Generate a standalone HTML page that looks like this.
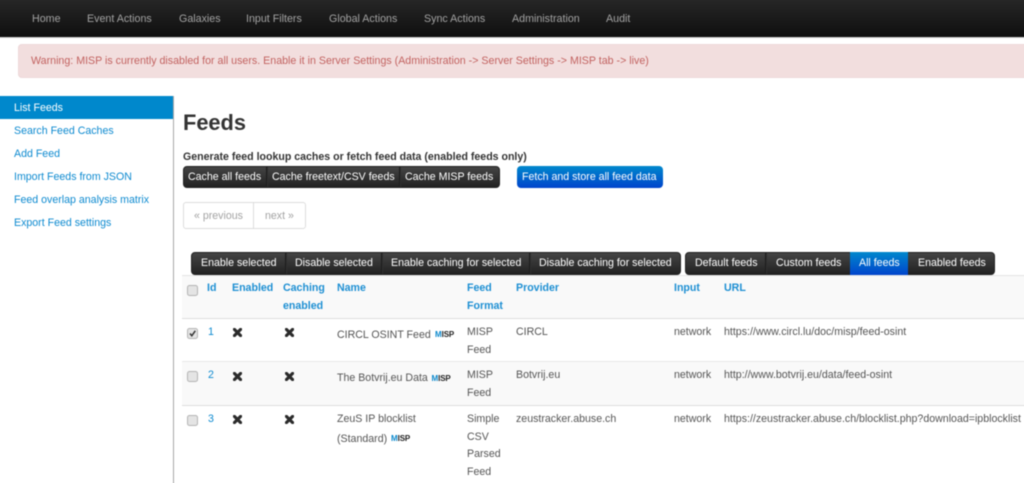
<!DOCTYPE html>
<html><head><meta charset="utf-8"><style>
html,body{margin:0;padding:0;background:#fff;overflow:hidden}
#o{position:relative;width:1024px;height:483px;overflow:hidden}
#r{position:absolute;left:0;top:0;width:1024px;height:483px;font-family:"Liberation Sans",sans-serif;font-size:10.62px;color:#555;filter:blur(.4px)}
#r div,#r span,#r svg{position:absolute}
.t{white-space:nowrap;line-height:14px;height:14px}
.n{color:#a2a2a2;font-size:10.7px}
.s{color:#0d8ad0;font-size:10.62px}
.b{color:#fff;font-size:10.62px}
.h{color:#1d8fd3;font-weight:bold;font-size:10.62px}
.sep{width:1px;background:#1c1c1c;border-right:1px solid #303030}
.grp{background:linear-gradient(#444,#222);border-radius:4px;border:1px solid #222;box-sizing:border-box}
.m{font-size:8px;font-weight:bold;color:#222;line-height:10px;height:10px;white-space:nowrap;letter-spacing:-.1px}
.m b{color:#0a88cc}
.c{width:11px;height:11px;box-sizing:border-box;background:#e4e4e4;border:1px solid #b4b4b4;border-radius:2.5px}
</style></head><body><div id="o"><div id="r">
<div style="left:-6px;top:-6px;width:1036px;height:43px;background:linear-gradient(#262626 6px,#0f0f0f)"></div>
<div style="left:-6px;top:37px;width:1036px;height:1px;background:#ccc"></div>
<div class="t n" style="left:32px;top:12px">Home</div>
<div class="t n" style="left:87px;top:12px">Event Actions</div>
<div class="t n" style="left:179px;top:12px">Galaxies</div>
<div class="t n" style="left:246px;top:12px">Input Filters</div>
<div class="t n" style="left:329px;top:12px">Global Actions</div>
<div class="t n" style="left:424px;top:12px">Sync Actions</div>
<div class="t n" style="left:512px;top:12px">Administration</div>
<div class="t n" style="left:606px;top:12px">Audit</div>

<div style="left:18px;top:44px;width:1012px;height:34px;background:#f2dede;border-radius:4px;box-shadow:inset 0 0 0 1px #eed9da"></div>
<div class="t" style="left:31px;top:54px;color:#c26260;font-size:10.66px">Warning: MISP is currently disabled for all users. Enable it in Server Settings (Administration -&gt; Server Settings -&gt; MISP tab -&gt; live)</div>

<div style="left:173px;top:96px;width:1px;height:393px;background:#a8a8a8"></div>
<div style="left:-6px;top:96px;width:179px;height:23px;background:#0088cc"></div>
<div class="t" style="left:14px;top:101px;color:#fff">List Feeds</div>
<div class="t s" style="left:14px;top:124px">Search Feed Caches</div>
<div class="t s" style="left:14px;top:147px">Add Feed</div>
<div class="t s" style="left:14px;top:170px">Import Feeds from JSON</div>
<div class="t s" style="left:14px;top:193px">Feed overlap analysis matrix</div>
<div class="t s" style="left:14px;top:216px">Export Feed settings</div>

<div class="t" style="left:183px;top:116px;font-size:21.8px;font-weight:bold;color:#333">Feeds</div>
<div class="t" style="left:183px;top:150px;font-weight:bold;color:#333;font-size:10.6px">Generate feed lookup caches or fetch feed data (enabled feeds only)</div>

<div class="grp" style="left:183px;top:166px;width:317px;height:22px"></div>
<div class="sep" style="left:266px;top:167px;height:20px"></div>
<div class="sep" style="left:399px;top:167px;height:20px"></div>
<div class="t b" style="left:188px;top:170px">Cache all feeds</div>
<div class="t b" style="left:272px;top:170px">Cache freetext/CSV feeds</div>
<div class="t b" style="left:405px;top:170px">Cache MISP feeds</div>
<div style="left:517px;top:166px;width:146px;height:22px;border-radius:4px;background:linear-gradient(#0088cc,#0044cc)"></div>
<div class="t b" style="left:522px;top:170px">Fetch and store all feed data</div>

<div style="left:183px;top:202px;width:123px;height:27px;box-sizing:border-box;border:1px solid #ddd;border-radius:3px;background:#fff"></div>
<div style="left:253px;top:203px;width:1px;height:25px;background:#ddd"></div>
<div class="t" style="left:194px;top:209px;color:#a3a3a3">« previous</div>
<div class="t" style="left:265px;top:209px;color:#a3a3a3">next »</div>

<div class="grp" style="left:191px;top:252px;width:490px;height:23px"></div>
<div class="sep" style="left:285px;top:253px;height:21px"></div>
<div class="sep" style="left:381px;top:253px;height:21px"></div>
<div class="sep" style="left:529px;top:253px;height:21px"></div>
<div class="t b" style="left:201px;top:256px">Enable selected</div>
<div class="t b" style="left:295px;top:256px">Disable selected</div>
<div class="t b" style="left:391px;top:256px">Enable caching for selected</div>
<div class="t b" style="left:539px;top:256px">Disable caching for selected</div>

<div class="grp" style="left:685px;top:252px;width:310px;height:23px"></div>
<div class="sep" style="left:765px;top:253px;height:21px"></div>
<div style="left:850px;top:252px;width:58px;height:23px;background:linear-gradient(#0088cc,#0044cc)"></div>
<div class="t b" style="left:695px;top:256px">Default feeds</div>
<div class="t b" style="left:776px;top:256px">Custom feeds</div>
<div class="t b" style="left:859px;top:256px">All feeds</div>
<div class="t b" style="left:918px;top:256px">Enabled feeds</div>

<div style="left:182px;top:275px;width:848px;height:44px;background:#f9f9f9;border-top:1px solid #e4e4e4;box-sizing:border-box"></div>
<div style="left:182px;top:318px;width:848px;height:1px;background:#ddd"></div>
<div style="left:182px;top:361px;width:848px;height:44px;background:#f9f9f9;border-top:1px solid #e8e8e8;box-sizing:border-box"></div>
<div style="left:182px;top:405px;width:848px;height:1px;background:#ddd"></div>

<div class="c" style="left:187px;top:285px"></div>
<div class="t h" style="left:207px;top:281px">Id</div>
<div class="t h" style="left:232px;top:281px">Enabled</div>
<div class="t h" style="left:283px;top:281px">Caching</div>
<div class="t h" style="left:283px;top:299px">enabled</div>
<div class="t h" style="left:337px;top:281px">Name</div>
<div class="t h" style="left:467px;top:281px">Feed</div>
<div class="t h" style="left:467px;top:299px">Format</div>
<div class="t h" style="left:516px;top:281px">Provider</div>
<div class="t h" style="left:674px;top:281px">Input</div>
<div class="t h" style="left:724px;top:281px">URL</div>

<div class="c" style="left:187px;top:328px"></div>
<svg style="left:187px;top:328px" width="11" height="11" viewBox="0 0 11 11"><path d="M3 5.5 L4.8 7.8 L8.3 2.8" fill="none" stroke="#333" stroke-width="1.5"/></svg>
<div class="t s" style="left:208px;top:325px">1</div>
<svg style="left:233px;top:328px" width="9" height="9" viewBox="0 0 9 9"><path d="M1.4 1.4 L7.6 7.6 M7.6 1.4 L1.4 7.6" stroke="#2b2b2b" stroke-width="3.1" stroke-linecap="round"/></svg>
<svg style="left:285px;top:328px" width="9" height="9" viewBox="0 0 9 9"><path d="M1.4 1.4 L7.6 7.6 M7.6 1.4 L1.4 7.6" stroke="#2b2b2b" stroke-width="3.1" stroke-linecap="round"/></svg>
<div class="t" style="left:337px;top:328px">CIRCL OSINT Feed</div>
<div class="m" style="left:435px;top:330px"><b>M</b>ISP</div>
<div class="t" style="left:467px;top:325px">MISP</div>
<div class="t" style="left:467px;top:343px">Feed</div>
<div class="t" style="left:516px;top:325px">CIRCL</div>
<div class="t" style="left:674px;top:325px">network</div>
<div class="t" style="left:724px;top:325px">https://www.circl.lu/doc/misp/feed-osint</div>

<div class="c" style="left:187px;top:371px"></div>
<div class="t s" style="left:208px;top:368px">2</div>
<svg style="left:233px;top:372px" width="9" height="9" viewBox="0 0 9 9"><path d="M1.4 1.4 L7.6 7.6 M7.6 1.4 L1.4 7.6" stroke="#2b2b2b" stroke-width="3.1" stroke-linecap="round"/></svg>
<svg style="left:285px;top:372px" width="9" height="9" viewBox="0 0 9 9"><path d="M1.4 1.4 L7.6 7.6 M7.6 1.4 L1.4 7.6" stroke="#2b2b2b" stroke-width="3.1" stroke-linecap="round"/></svg>
<div class="t" style="left:337px;top:371px">The Botvrij.eu Data</div>
<div class="m" style="left:431.5px;top:374px"><b>M</b>ISP</div>
<div class="t" style="left:467px;top:368px">MISP</div>
<div class="t" style="left:467px;top:386px">Feed</div>
<div class="t" style="left:516px;top:368px">Botvrij.eu</div>
<div class="t" style="left:674px;top:368px">network</div>
<div class="t" style="left:724px;top:368px">http://www.botvrij.eu/data/feed-osint</div>

<div class="c" style="left:187px;top:415px"></div>
<div class="t s" style="left:208px;top:412px">3</div>
<svg style="left:233px;top:415px" width="9" height="9" viewBox="0 0 9 9"><path d="M1.4 1.4 L7.6 7.6 M7.6 1.4 L1.4 7.6" stroke="#2b2b2b" stroke-width="3.1" stroke-linecap="round"/></svg>
<svg style="left:285px;top:415px" width="9" height="9" viewBox="0 0 9 9"><path d="M1.4 1.4 L7.6 7.6 M7.6 1.4 L1.4 7.6" stroke="#2b2b2b" stroke-width="3.1" stroke-linecap="round"/></svg>
<div class="t" style="left:337px;top:412px">ZeuS IP blocklist</div>
<div class="t" style="left:337px;top:432px">(Standard)</div>
<div class="m" style="left:391px;top:434px"><b>M</b>ISP</div>
<div class="t" style="left:467px;top:412px">Simple</div>
<div class="t" style="left:467px;top:430px">CSV</div>
<div class="t" style="left:467px;top:447px">Parsed</div>
<div class="t" style="left:467px;top:465px">Feed</div>
<div class="t" style="left:516px;top:412px">zeustracker.abuse.ch</div>
<div class="t" style="left:674px;top:412px">network</div>
<div class="t" style="left:724px;top:412px">https://zeustracker.abuse.ch/blocklist.php?download=ipblocklist</div>
</div></div></body></html>
